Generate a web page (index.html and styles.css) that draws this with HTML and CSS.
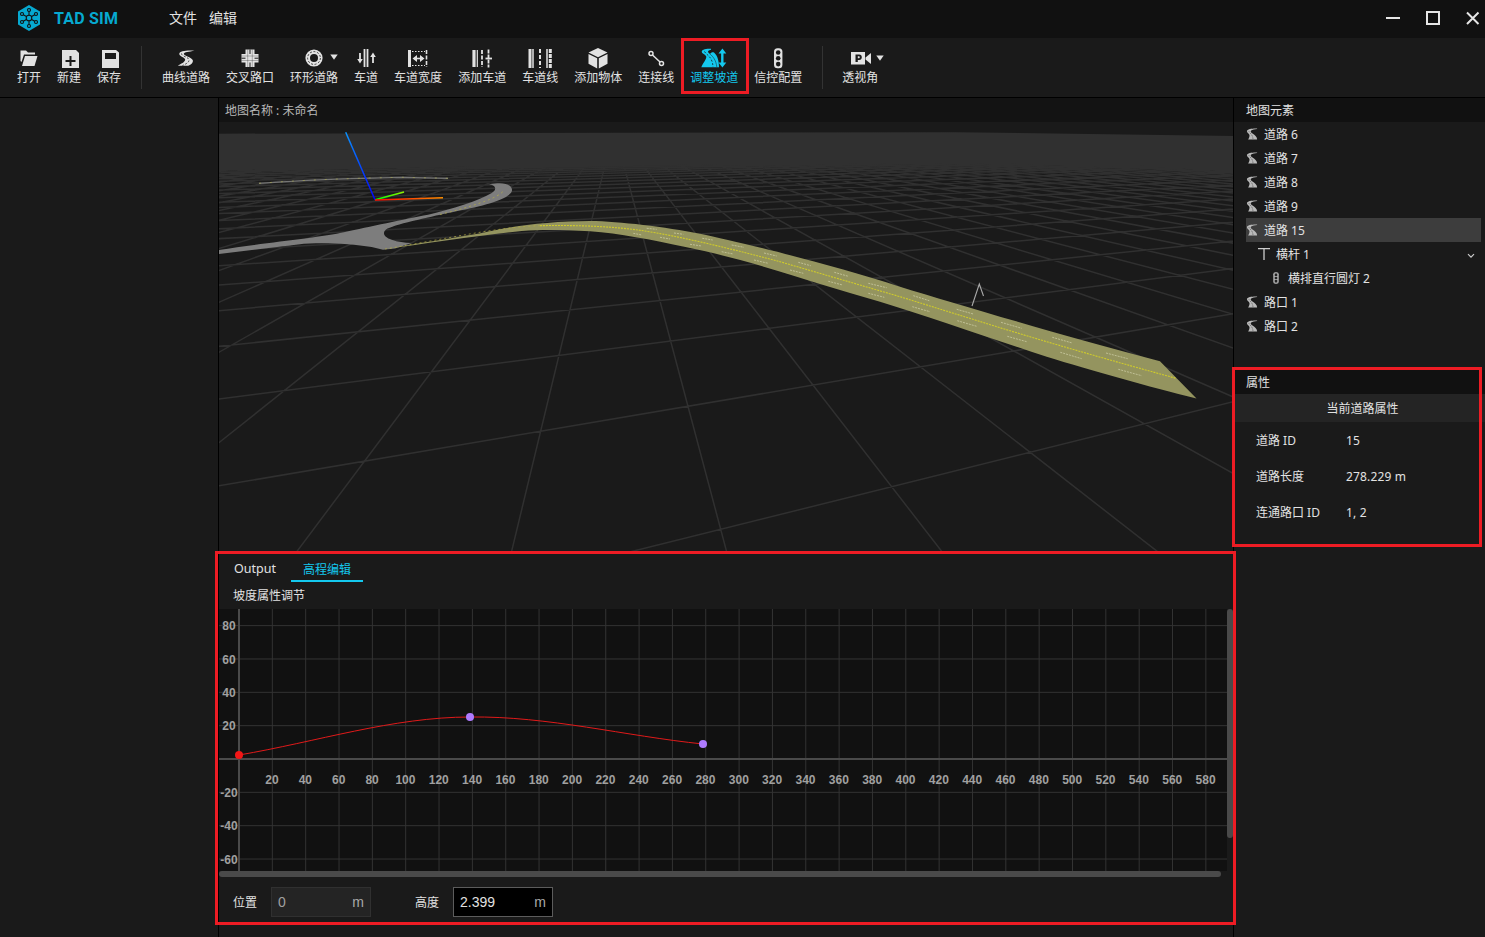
FILE: index.html
```html
<!DOCTYPE html>
<html lang="zh-CN">
<head>
<meta charset="utf-8">
<title>TAD SIM</title>
<link rel="stylesheet" href="styles.css">
</head>
<body>
<svg class="defs" width="0" height="0">
  <symbol id="road" viewBox="0 0 11 12"><path d="M10.6.5C6 .3.6 1 .4 3c-.1 1.800 2.400 2.600 2.600 4.200C3.100 9 2.200 10.500 1.600 11.600h9C10.800 8.800 8.500 7 6 5.400 4.400 4.400 3.700 3.400 4.700 2.500 5.600 1.600 8.500 1.200 10.600 1Z" fill="#b9b9b9"/><path d="M2.300 3.200C3 5 6.500 6.500 6.500 11.600" fill="none" stroke="#444" stroke-width=".6" stroke-dasharray="1.500 1"/></symbol>
</svg>
<header class="titlebar">
  <svg class="logo" width="24" height="28" viewBox="0 0 24 28"><path d="M12 1 23 7.500v13L12 27 1 20.500v-13Z" fill="#06a9d0"/><g stroke="#111" stroke-width="1.100" fill="none"><path d="M12 14V6M12 14v8M12 14l-7-4M12 14l7-4M12 14l-7 4M12 14l7 4"/><g fill="#06a9d0"><circle cx="12" cy="14" r="2.800"/><circle cx="12" cy="6" r="1.500"/><circle cx="12" cy="22" r="1.500"/><circle cx="5" cy="10" r="1.500"/><circle cx="19" cy="10" r="1.500"/><circle cx="5" cy="18" r="1.500"/><circle cx="19" cy="18" r="1.500"/></g></g></svg>
  <span class="brand">TAD SIM</span>
  <nav class="menu"><span>文件</span><span>编辑</span></nav>
  <svg class="winctl" width="96" height="16" viewBox="0 0 96 16" fill="none" stroke="#e6e6e6" stroke-width="2"><path d="M1 8h14"/><path d="M42 2h12v12H42Z"/><path d="m82 2.500 11.500 11.500M93.500 2.500 82 14"/></svg>
</header>

<div class="toolbar">
  <div class="tool"><svg class="ico" viewBox="0 0 26 22"><path d="M4.500 2.500h5.500l2 2h7v2H8L5.500 14l-1-1Z"/><path d="M9 8h12.500l-3 10H6Z"/></svg><span>打开</span></div>
  <div class="tool"><svg class="ico" viewBox="0 0 26 22"><path d="M6 2h14l3 3v15H6Z"/><path class="cut" d="M14.500 8v10M9.500 13h10" stroke-width="2"/></svg><span>新建</span></div>
  <div class="tool"><svg class="ico" viewBox="0 0 26 22"><path fill-rule="evenodd" d="M6 2h14l3 2.500V20H6ZM9 5v6h11V5Z"/></svg><span>保存</span></div>
  <i class="sep"></i>
  <div class="tool"><svg class="ico" viewBox="0 0 26 22"><path d="M21.500 2.800C14 2 6.500 3.200 6.300 5.800 6 8.500 12.500 9.500 12.200 11.800 12 14 8 16 4.800 17.700h10.500c3-1 5-3 4.600-5.200C19.400 9.500 10.500 7.700 10.800 5.700 11 4.200 16 3.800 21.500 2.800Z"/><path class="mark" d="M8.500 5.500c0 3 7.500 3.500 7.500 6.500 0 2.500-3 4-6.500 5.500"/></svg><span>曲线道路</span></div>
  <div class="tool"><svg class="ico" viewBox="0 0 26 22"><path d="M8.500 1.500h9V6H21.500v8.500h-4V19h-9v-4.500H4.500V6h4Z"/><path class="cut" d="M13 1.500v4.500M13 14.500V19M4.500 10.200h4M17.500 10.200h4" stroke-width="1"/><path class="cut" d="M10.700 1.500v17.500M15.300 1.500v17.500M4.500 8h17M4.500 12.500h17" stroke-width=".5" opacity=".6"/></svg><span>交叉路口</span></div>
  <div class="tool"><svg class="ico" viewBox="0 0 26 22"><circle cx="13" cy="10" r="6.300" fill="none" stroke="#e2e2e2" stroke-width="4.600"/><circle class="mark" cx="13" cy="10" r="6.400"/></svg><svg class="caret" viewBox="0 0 8 6"><path d="M.3.500h7.400L4 5.700Z"/></svg><span>环形道路</span></div>
  <div class="tool"><svg class="ico" viewBox="0 0 26 22"><path class="ln" d="M11.500 1v18M14.500 1v18" stroke-width="1.800"/><path class="ln" d="M7 5v8M20 7v8" stroke-width="1.800"/><path d="M4.200 11h5.600L7 15.500ZM17.200 9h5.600L20 4.500Z"/></svg><span>车道</span></div>
  <div class="tool"><svg class="ico" viewBox="0 0 26 22"><path class="ln" d="M4.500 2v17" stroke-width="3"/><path class="ln" d="M21.500 2v17" stroke-width="1.600" stroke-dasharray="4 1.500"/><path class="ln" d="M7 3.500h13M7 17.500h13" stroke-width="1" stroke-dasharray="1.500 1.500"/><path class="ln" d="M9 10.500h9" stroke-width="1.600"/><path d="m7.500 10.500 4.500-3.500v7ZM19.500 10.500 15 7v7Z"/></svg><span>车道宽度</span></div>
  <div class="tool"><svg class="ico" viewBox="0 0 26 22"><path class="ln" d="M5 2v17" stroke-width="3.200"/><path class="ln" d="M8.300 2v17" stroke-width="1.200"/><path class="ln" d="M13 2v17" stroke-width="1.800" stroke-dasharray="4 1.500"/><path class="ln" d="M19.500 1.500v18" stroke-width="1.800" stroke-dasharray="4 1"/><path class="ln" d="M16.500 10.500h6.500" stroke-width="1.800"/></svg><span>添加车道</span></div>
  <div class="tool"><svg class="ico" viewBox="0 0 26 22"><path class="ln" d="M3 1v19" stroke-width="3"/><path class="ln" d="M6 1v19M20 1v19" stroke-width="1.500"/><path class="ln" d="M13 1v19" stroke-width="2" stroke-dasharray="4 2"/><path class="ln" d="M23.300 1v19" stroke-width="3" stroke-dasharray="4 1"/></svg><span>车道线</span></div>
  <div class="tool"><svg class="ico" viewBox="0 0 26 22"><path d="m13 0 9.500 4.500L13 9.300 3.500 4.500Z"/><path d="M3.500 6l8.700 4.300V20.500l-8.700-4.700ZM22.500 6l-8.700 4.300V20.500l8.700-4.700Z"/></svg><span>添加物体</span></div>
  <div class="tool"><svg class="ico" viewBox="0 0 26 22"><g fill="none" stroke="#e2e2e2" stroke-width="1.500"><circle cx="8" cy="5.500" r="2"/><circle cx="18.500" cy="15.500" r="2"/><path d="m9.500 7 7.500 7"/></g></svg><span>连接线</span></div>
  <div class="tool on"><svg class="ico" viewBox="0 0 26 22"><path d="M10 .800C4 .500.5 1.800.8 4c.3 2 4.200 2.700 4.500 4.700C5.500 11.500 1.500 15.500.3 19.300h17.700C18 14 17 8 13 4.500 11.500 3.800 10 4.500 9 6 7.500 4.800 5 3 10 1.800Z"/><path class="mark" d="M3.500 3.500C5 7 11.500 8 12 19"/><path class="cut" d="M9 6c3 2.500 6 6 6.800 13" stroke-width=".5"/><path d="M21.300 4v12" stroke="#14c8ee" stroke-width="2.400"/><path d="M17.500 5.500h7.800L21.400.5ZM17.500 14.500h7.800l-3.900 5Z"/></svg><span>调整坡道</span></div>
  <div class="tool"><svg class="ico" viewBox="0 0 26 22"><rect x="9" y=".3" width="8.400" height="20" rx="3.500"/><g fill="#1a1a1a"><circle cx="13.200" cy="4.500" r="2.300"/><circle cx="13.200" cy="10.300" r="2.300"/><circle cx="13.200" cy="16.100" r="2.300"/></g></svg><span>信控配置</span></div>
  <i class="sep last"></i>
  <div class="tool"><svg class="ico" viewBox="0 0 26 22"><path fill-rule="evenodd" d="M4 4h14v12.500H4ZM8.500 6.500v7.500h2.300V12h1.400c3.500 0 3.500-5.500 0-5.500ZM10.800 8.300v2h1.200c1 0 1-2 0-2Z"/><path d="m18.500 9.500 5.500-4.500v11l-5.500-4.500Z"/></svg><svg class="caret low" viewBox="0 0 8 6"><path d="M.3.500h7.400L4 5.700Z"/></svg><span>透视角</span></div>
</div>

<main class="work">
  <aside class="left"></aside>
  <section class="center">
    <div class="mapname">地图名称 : 未命名</div>
    <svg class="scene" viewBox="219 122 1014 430">
      <defs>
        <linearGradient id="fog" x1="0" y1="0" x2="0" y2="1"><stop offset="0" stop-color="#303030"/><stop offset=".72" stop-color="#303030"/><stop offset="1" stop-color="#303030" stop-opacity="0"/></linearGradient>
        <linearGradient id="ax-z" gradientUnits="userSpaceOnUse" x1="346" y1="132" x2="375" y2="200"><stop offset="0" stop-color="#0a94ff"/><stop offset="1" stop-color="#00f"/></linearGradient>
        <linearGradient id="ax-x" gradientUnits="userSpaceOnUse" x1="375" y1="200" x2="443" y2="198"><stop offset="0" stop-color="#f00"/><stop offset="1" stop-color="#ff9000"/></linearGradient>
        <linearGradient id="ax-y" gradientUnits="userSpaceOnUse" x1="375" y1="200" x2="404" y2="192"><stop offset="0" stop-color="#0f0"/><stop offset="1" stop-color="#90f000"/></linearGradient>
      </defs>
      <path id="ground" class="ground"/>
      <path d="M219 133.700 955 132.200 1233 136V174H219Z" fill="url(#fog)"/>
      <path class="far" d="M259 183.300C300 180.300 340 178.500 402 177.300L448 178.300"/>
      <path class="far-dash" d="M259 183.300C300 180.300 340 178.500 402 177.300L448 178.300"/>
      <path d="M219 250C262 243 318 238 345 232C368 227 405 219 428 214.700C452 209 478 201 491.700 193C498 189 495 185 489 184.300C498 182.800 506 182.600 510 186C513 189 513 192 508 195.500C498 203 470 208.500 448 213C430 217 392 225 386 229.500C382 233 384 237 391.700 239.700C398 242 404 242.500 411.700 243L395 248.500L383 249.700L371.700 247C350 244 322 242 298 244.500L219 254Z" fill="#7d7d7d"/>
      <path class="lane-y thin" d="M440 214.500C470 207 500 198 504 190"/>
      <path d="M382 249.500C420 243 450 238.500 482 233C508 226.500 550 221 590 221C620 221.300 665 227 700 233.700C740 242 830 264 900 286.700C960 305 1060 335 1160 361.300L1196.500 398.500C1150 387 1090 370 1046.700 356.700C990 338 930 317 880 301.700C860 296 840 290 820 284C780 271 730 256 686.700 247.300C650 239.500 620 233.500 590 231.300C560 229.500 540 229.700 521.700 231C480 235 430 243 382 249.500Z" fill="#94945f"/>
      <path class="lane-y thin" d="M385 249C440 240 500 226.500 540 225.700"/>
      <path class="lane-y" d="M540 225.700C570 225 610 226 640 230.300C680 236 740 251 780 261.700L900 296.700L1000 327.700C1060 346 1120 363 1176 378.300"/>
      <path id="dashes" class="dashes"/>
      <path class="pole" d="M972 306 979.300 284 983.500 296"/>
      <path d="M345.700 132.300 375 199.700" stroke="url(#ax-z)" stroke-width="1.500"/>
      <path d="M375 199.700 404 192" stroke="url(#ax-y)" stroke-width="1.500"/>
      <path d="M375 199.900 443 197.800" stroke="url(#ax-x)" stroke-width="1.500"/>
    </svg>
    <div class="dock">
      <div class="tabs"><span class="tab">Output</span><span class="tab active">高程编辑</span></div>
      <div class="subtitle">坡度属性调节</div>
      <div class="chartbox">
        <svg id="chart" class="chart" viewBox="219 609 1008 262"></svg>
        <i class="vbar"></i>
      </div>
      <i class="hbar"></i>
      <div class="fields">
        <span>位置</span><div class="field off"><b>0</b><em>m</em></div>
        <span>高度</span><div class="field"><b>2.399</b><em>m</em></div>
      </div>
    </div>
  </section>
  <aside class="right">
    <div class="phead">地图元素</div>
    <ul class="tree">
      <li><svg class="ti"><use href="#road"/></svg><span>道路 6</span></li>
      <li><svg class="ti"><use href="#road"/></svg><span>道路 7</span></li>
      <li><svg class="ti"><use href="#road"/></svg><span>道路 8</span></li>
      <li><svg class="ti"><use href="#road"/></svg><span>道路 9</span></li>
      <li class="sel"><svg class="ti"><use href="#road"/></svg><span>道路 15</span></li>
      <li class="d1"><svg class="ti" viewBox="0 0 12 12"><path d="M0 .7h12M6 1v11" stroke="#ccc" stroke-width="1.300"/></svg><span>横杆 1</span><svg class="chev" viewBox="0 0 8 6"><path d="m1 1.200 3 3 3-3" fill="none" stroke="#ccc" stroke-width="1.200"/></svg></li>
      <li class="d2"><svg class="ti" viewBox="0 0 12 12"><rect x="3.300" y=".3" width="5.400" height="11.400" rx="2" fill="#b9b9b9"/><path d="M6 1.500v9" stroke="#222" stroke-width="2.600" stroke-dasharray="2.400 .9"/></svg><span>横排直行圆灯 2</span></li>
      <li><svg class="ti"><use href="#road"/></svg><span>路口 1</span></li>
      <li><svg class="ti"><use href="#road"/></svg><span>路口 2</span></li>
    </ul>
    <div class="phead">属性</div>
    <div class="pgroup">当前道路属性</div>
    <dl class="props">
      <dt>道路 ID</dt><dd>15</dd>
      <dt>道路长度</dt><dd>278.229 m</dd>
      <dt>连通路口 ID</dt><dd>1, 2</dd>
    </dl>
  </aside>
</main>
<div class="callout c-tool"></div>
<div class="callout c-props"></div>
<div class="callout c-dock"></div>
<script src="scene.js"></script>
</body>
</html>
```
FILE: styles.css
```css
* { box-sizing: border-box; margin: 0; padding: 0; }
body {
  width: 1485px; height: 937px; overflow: hidden; position: relative;
  display: flex; flex-direction: column;
  background: #1a1a1a; color: #e2e2e2;
  font: 12px/16px "Noto Sans", "Noto Sans CJK SC", sans-serif;
}
svg { display: block; flex: none; }
.defs { position: absolute; }

.titlebar { height: 38px; flex: none; background: #111; display: flex; align-items: center; padding: 0 4px 2px 17px; }
.brand { margin-left: 13px; width: 64px; padding-top: 1px; color: #06a9d0; font: bold 16px/20px Roboto, sans-serif; letter-spacing: .2px; white-space: nowrap; }
.menu { display: flex; gap: 12px; margin-left: 51px; font-size: 14px; line-height: 20px; }
.winctl { margin-left: auto; }

.toolbar { height: 60px; flex: none; display: flex; padding-left: 9px; border-bottom: 1px solid #000; }
.tool { position: relative; padding: 10px 8px 0; display: flex; flex-direction: column; align-items: center; white-space: nowrap; }
.ico { width: 26px; height: 22px; fill: #e2e2e2; overflow: visible; margin: 0 -1px; }
.cut { fill: none; stroke: #1a1a1a; }
.ln { fill: none; stroke: #e2e2e2; }
.mark { fill: none; stroke: #1a1a1a; stroke-width: .8; stroke-dasharray: 2 1.600; }
.caret { position: absolute; left: 48px; top: 16px; width: 8px; height: 6px; fill: #e2e2e2; }
.caret.low { left: 42px; top: 17px; }
.on { color: #14c8ee; }
.on .ico { fill: #14c8ee; }
.sep { width: 1px; height: 43px; margin: 8px 12px 0; background: #333; }
.sep.last { margin-right: 11px; }

.work { flex: 1; display: flex; min-height: 0; }
.left { width: 219px; border-right: 1px solid #000; }
.center { width: 1014px; display: flex; flex-direction: column; }
.mapname { height: 24px; background: #131313; padding: 5px 6px 0; color: #b8b8b8; }
.scene { width: 1014px; height: 430px; }
.ground { fill: none; stroke: #303030; stroke-width: 1.500; }
.far { fill: none; stroke: #757575; stroke-width: 1.200; }
.far-dash { fill: none; stroke: #9a9a55; stroke-width: .8; stroke-dasharray: 2 9; }
.lane-y { fill: none; stroke: #cfcb2b; stroke-width: 1.100; stroke-dasharray: 2 1; }
.lane-y.thin { stroke: #b5ad45; stroke-width: .7; stroke-dasharray: 2 3; }
.dashes { fill: none; stroke: #c4c49a; stroke-width: .9; stroke-dasharray: 2 1; }
.pole { fill: none; stroke: #aaa; stroke-width: 1.100; }

.dock { flex: 1; display: flex; flex-direction: column; }
.tabs { display: flex; padding-left: 3px; height: 30px; }
.tab { padding: 9px 12px 0; height: 30px; border-bottom: 2px solid transparent; font-size: 12.500px; }
.tab.active { padding-top: 10px; color: #14c8ee; border-color: #14c8ee; margin-left: 3px; font-size: 12px; }
.subtitle { height: 27px; padding: 6px 14px 0; }
.chartbox { display: flex; height: 262px; }
.chart { width: 1008px; height: 262px; background: #111; }
.vbar { width: 6px; height: 229px; border-radius: 3px; background: #4a4a4a; }
.hbar { width: 1002px; height: 6px; border-radius: 3px; background: #4a4a4a; }
.axis { stroke: #4a4a4a; stroke-width: 2; }
.gl { stroke: #333; stroke-width: 1; }
.tick { fill: #a0a0a0; font: bold 12px "Liberation Sans", sans-serif; text-anchor: middle; }
.curve { fill: none; stroke: #e01a1a; stroke-width: 1; }
.fields { display: flex; align-items: center; padding: 10px 0 0 14px; }
.fields span { width: 38px; padding-top: 2px; }
.field { width: 100px; height: 30px; margin-right: 44px; padding: 0 6px; border: 1px solid #5c5c5c; background: #000; display: flex; justify-content: space-between; align-items: center; font: 14px/20px "Liberation Sans", sans-serif; }
.field b, .field em { font-weight: normal; font-style: normal; }
.field em { color: #a8a8a8; }
.field.off { background: #242424; border-color: #303030; color: #a0a0a0; }

.right { width: 252px; border-left: 1px solid #000; }
.phead { height: 24px; padding: 5px 12px 0; background: #111; }
.tree { height: 248px; list-style: none; padding: 0 4px 0 12px; }
.tree li { height: 24px; display: flex; align-items: center; white-space: pre; }
.tree span { padding-top: 2px; }
.ti { width: 12px; height: 12px; margin-right: 6px; }
.sel { background: #3d3d3d; }
.tree .d1 { padding-left: 12px; }
.tree .d2 { padding-left: 24px; }
.chev { width: 8px; height: 6px; margin: 3px 6px 0 auto; }
.pgroup { height: 28px; line-height: 28px; padding: 1px 0 0 6px; background: #242424; text-align: center; }
.props { display: grid; grid-template-columns: 90px 1fr; padding: 1px 22px 0; line-height: 36px; }
.props dd { letter-spacing: .15px; }

.callout { position: absolute; border: 3px solid #ed1c24; }
.c-tool { left: 681px; top: 38px; width: 68px; height: 56px; }
.c-props { left: 1232px; top: 367px; width: 250px; height: 180px; }
.c-dock { left: 215px; top: 551px; width: 1021px; height: 374px; }
```
FILE: scene.js
```js
// Ground plane: cell (i, j) is projected through the two vanishing points.
const A = 0.1056, B = 0.3955;
function project(i, j) {
  const w = 1 + A * i + B * j;
  return [(891.7 + A * i * 2340 + B * j * 614) / w, (486.7 + A * i * 126 + B * j * 128) / w, w];
}
function segment(fixed, along) {
  const pts = [];
  for (let t = -60; t <= 160; t += 0.5) {
    const p = along === 'i' ? project(t, fixed) : project(fixed, t);
    if (p[2] > 0.3 && p[2] < 14) pts.push(p);
  }
  if (pts.length < 2) return '';
  const a = pts[0], b = pts[pts.length - 1];
  return `M${a[0].toFixed(1)} ${a[1].toFixed(1)}L${b[0].toFixed(1)} ${b[1].toFixed(1)}`;
}
let d = '';
for (let k = -50; k <= 110; k++) d += segment(k, 'j');
for (let k = -6; k <= 60; k++) d += segment(k, 'i');
document.getElementById('ground').setAttribute('d', d);

// Lane markings of the selected road.
const marks = [
  [646.7,228.3,656.7,229.3],[674,233,683.3,234.3],[702.3,238.3,712.7,240],[731.7,245,744,247.3],[764,253,776.7,256],
  [798.3,262.3,810.7,265.7],[834.3,272.3,848.3,276.3],[868.3,283.3,886.7,287.7],[633.3,233.3,641.7,235],[660,237.3,670,239],
  [690,244.3,701.7,246],[721.7,251.7,733.3,254],[754,260,768.3,263.3],[790,270,803.3,273.3],[828.3,281.3,842.7,285],
  [868.3,293.3,884.3,297.3],[913.3,295.7,929.3,300.7],[956.7,309.3,973.3,314],[1001,322.3,1021.7,328.3],
  [1052.3,337.3,1072.3,343],[1106,353,1127.7,358.7],[912.3,306.7,930,311.7],[957.3,320.7,976.7,326.3],
  [1007.3,336.3,1026.7,341.7],[1060.3,352.3,1081.7,358.7],[1118.3,369.3,1141.7,375.7]
];
document.getElementById('dashes').setAttribute('d', marks.map(m => `M${m[0]} ${m[1]}L${m[2]} ${m[3]}`).join(''));

// Elevation profile chart.
const X0 = 239, Y0 = 759, STEP = 33.34;
let s = '';
for (let n = 1; n <= 29; n++) { const x = X0 + STEP * n; s += `<path class="gl" d="M${x} 609V871"/>`; }
for (let n = -3; n <= 4; n++) if (n) { const y = Y0 - STEP * n; s += `<path class="gl" d="M219 ${y}H1227"/>`; }
s += `<path class="axis" d="M239 609V871M219 759H1227"/>`;
for (let n = 1; n <= 29; n++) s += `<text class="tick" x="${X0 + STEP * n - 0.3}" y="784">${n * 20}</text>`;
for (let n = -3; n <= 4; n++) if (n) s += `<text class="tick" x="229" y="${Y0 - STEP * n + 4.7}">${n * 20}</text>`;
s += `<path class="curve" d="M239 755C316 742 393 717 470 717C548 716 625 736 703 744"/>`;
s += `<circle cx="239" cy="755" r="4" fill="#f21616"/><circle cx="470" cy="717" r="4" fill="#ae7bff"/><circle cx="703" cy="744" r="4" fill="#ae7bff"/>`;
document.getElementById('chart').innerHTML = s;
```
